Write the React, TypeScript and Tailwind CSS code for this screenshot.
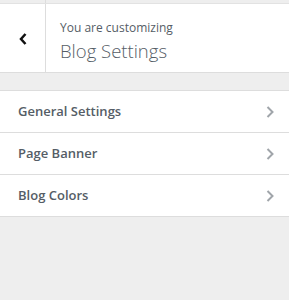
import React from 'react'

const sections = ['General Settings', 'Page Banner', 'Blog Colors']

function Chevron({ className }: { className?: string }) {
  return (
    <svg width="10" height="14" viewBox="0 0 10 14" className={className} fill="none">
      <path d="M2.5 2 L7.5 7 L2.5 12" stroke="currentColor" strokeWidth="2" />
    </svg>
  )
}

export default function App() {
  return (
    <div className="w-[289px] h-[300px] bg-[#eeeeee] font-['Open_Sans',sans-serif] overflow-hidden">
      <div className="h-[4px] flex border-b border-[#e2e2e2]">
        <div className="w-[46px] border-r border-[#dddddd]" />
      </div>
      <div className="flex h-[69px] bg-white border-b border-[#dddddd]">
        <div className="w-[46px] border-r border-[#dddddd] flex items-center justify-center pt-[2px]">
          <svg width="10" height="14" viewBox="0 0 10 14" fill="none">
            <path d="M7.5 2 L3 7 L7.5 12" stroke="#111111" strokeWidth="2.5" />
          </svg>
        </div>
        <div className="pl-[14px] pt-[15px] text-[#555d66]">
          <div className="text-[12px] leading-[18px]">You are customizing</div>
          <div className="text-[18.5px] leading-[26px] font-light mt-[1px]">Blog Settings</div>
        </div>
      </div>
      <div className="mt-[17px] bg-white border-y border-[#dddddd]">
        {sections.map((s, i) => (
          <div
            key={s}
            className={`h-[41px] flex items-center justify-between pl-[18px] pr-[14px] ${i > 0 ? 'border-t border-[#dddddd] h-[42px]' : ''}`}
          >
            <span className="text-[13px] font-semibold text-[#555d66]">{s}</span>
            <Chevron className="text-[#a0a5aa]" />
          </div>
        ))}
      </div>
    </div>
  )
}
